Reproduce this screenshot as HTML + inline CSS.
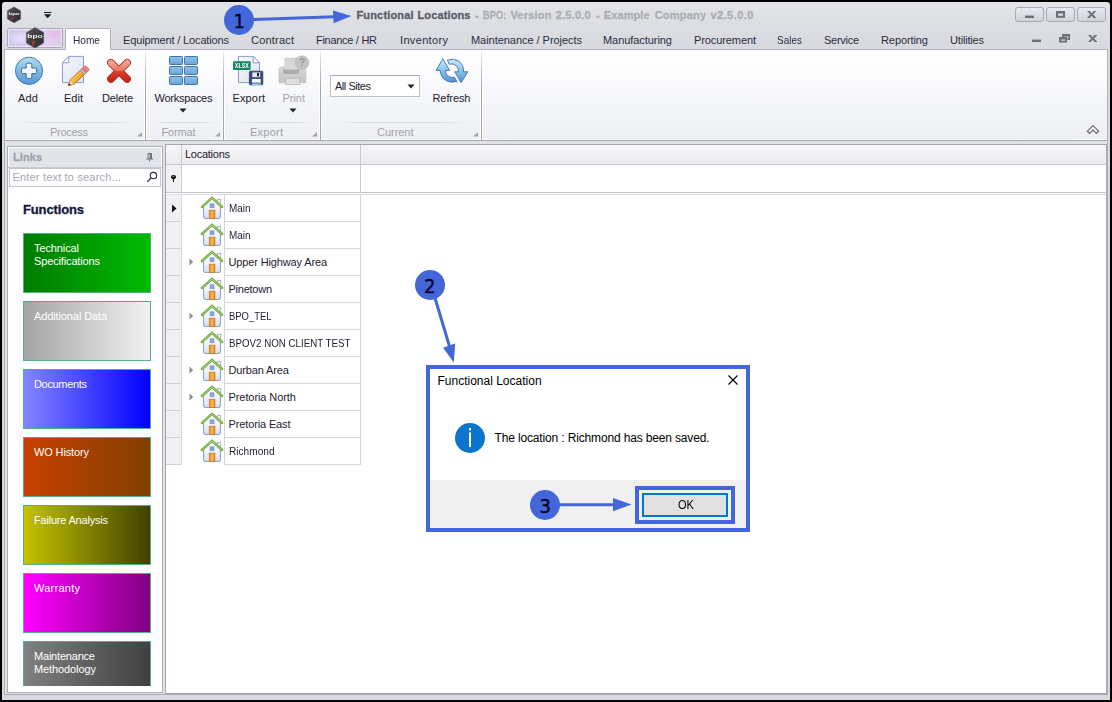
<!DOCTYPE html>
<html><head><meta charset="utf-8"><title>Functional Locations</title>
<style>
*{box-sizing:border-box;margin:0;padding:0}
html,body{width:1112px;height:702px;overflow:hidden;background:#000}
body{font-family:"Liberation Sans",sans-serif;font-size:11px;color:#1e2030;position:relative}
.abs{position:absolute}
.t{position:absolute;white-space:pre}
#win{left:2px;top:2px;width:1108px;height:698px;background:linear-gradient(#e3e4e8,#dcdde2 26px,#d9dadf 48px,#d9dadf);border-radius:3px 3px 0 0}
#ribbon{left:5px;top:49px;width:1102px;height:92px;background:linear-gradient(#ffffff,#fdfdfe 18%,#f5f6f9 55%,#eff0f4);border-top:1px solid #b4b6bf;border-bottom:1px solid #a9abb4}
#ribbon:after{content:"";position:absolute;left:0;right:0;bottom:0;height:1px;background:#fff}
#hometab{left:65px;top:28px;width:46px;height:22px;background:#fff;border:1px solid #b4b6bf;border-bottom:none;border-radius:2px 2px 0 0}
#appbtn{left:7px;top:28px;width:56px;height:20px;border:1px solid #a9a9b6;border-radius:2px;background:radial-gradient(ellipse 14px 7px at 12px 9px,rgba(255,255,255,.45),rgba(255,255,255,0)),radial-gradient(ellipse 12px 6px at 46px 5px,rgba(226,180,232,.7),rgba(226,180,232,0)),linear-gradient(90deg,#cfc7ee,#dccff1 40%,#e6d0f0 75%,#dccaeb);box-shadow:inset 0 0 0 1px rgba(255,255,255,.55)}
.gsep{position:absolute;top:51px;width:3px;height:89px;margin-left:-1px;background:linear-gradient(90deg,#fff 33.3%,#a2a4ae 33.3%,#a2a4ae 66.6%,#fff 66.6%);-webkit-mask-image:linear-gradient(rgba(0,0,0,.2),#000 40%,#000);mask-image:linear-gradient(rgba(0,0,0,.2),#000 40%,#000)}
.gline{position:absolute;top:122px;height:1px;background:linear-gradient(90deg,rgba(218,219,225,0),#dadbe1 18%,#dadbe1 82%,rgba(218,219,225,0))}
.launch{position:absolute;top:131px;width:6px;height:6px}
#strip{left:5px;top:141px;width:1102px;height:553px;background:#e1e2e7}
#links{left:7px;top:146px;width:156px;height:547px;background:#fff;border:1px solid #abadb7}
#lhead{left:8px;top:147px;width:154px;height:20px;background:#e3e4e9;border:1px solid #fff;border-bottom:none}
#lheadb{left:8px;top:167px;width:154px;height:1px;background:#c9cbd2}
#search{left:9px;top:168px;width:152px;height:19px;background:#fff;border:1px solid #c2c4cc}
.sb{left:23px;width:128px;border:1px solid #4fb184}
#grid{left:165px;top:144px;width:942px;height:550px;background:#fff;border:1px solid #a4a6b1}
#ghead{left:166px;top:145px;width:940px;height:19px;background:linear-gradient(#f6f6f8,#ececf0)}
.hl{position:absolute;background:#c9cbd3}
.ind{left:166px;width:15px;height:27px;background:#f1f1f4;border-bottom:1px solid #d2d3da}
.cell{left:224px;width:137px;height:28px;border:1px solid #d5d6dc}
.cbtn{position:absolute;top:7px;width:29px;height:15px;border:1px solid #a7a9b4;border-radius:3px;background:linear-gradient(#e9eaee,#dcdde3 50%,#d2d4db)}
#dlg{left:430px;top:369px;width:316px;height:159px;background:#fff}
#dfoot{left:430px;top:480px;width:316px;height:48px;background:#f0f0f0}
.hi{position:absolute;border:4px solid #4367d9}
#okb{left:642px;top:493px;width:86px;height:24px;background:#e1e1e1;border:2px solid #0078d7}
</style></head><body>
<svg width="0" height="0" style="position:absolute"><defs>
<linearGradient id="wall" x1="0" y1="0" x2="0" y2="1"><stop offset="0" stop-color="#ffffff"/><stop offset=".45" stop-color="#f4f6fb"/><stop offset="1" stop-color="#d6deef"/></linearGradient>
<linearGradient id="door" x1="0" y1="0" x2="1" y2="0"><stop offset="0" stop-color="#e58a1f"/><stop offset=".5" stop-color="#f6b95a"/><stop offset="1" stop-color="#e58a1f"/></linearGradient>
<g id="house">
<rect x="17.3" y="4.4" width="3.4" height="8" fill="#eef1f8" stroke="#a3aecb" stroke-width=".9"/>
<path d="M3.6 11.4 L12 3.8 L20.4 11.4 L20.4 22 Q20.4 23.4 19 23.4 L5 23.4 Q3.6 23.4 3.6 22Z" fill="url(#wall)" stroke="#8c9cc0" stroke-width="1"/>
<rect x="10.1" y="8.8" width="3.9" height="3.9" fill="#8aa6e2" stroke="#7b93cc" stroke-width=".7"/>
<rect x="9.3" y="15.2" width="5.6" height="8.3" fill="url(#door)" stroke="#cc7a1e" stroke-width=".8"/>
<path d="M1.9 12 L12 2.9 L22.1 12" fill="none" stroke="#73aa43" stroke-width="2.5" stroke-linecap="round" stroke-linejoin="miter"/>
<path d="M2.4 11.7 L12 3.1 L21.6 11.7" fill="none" stroke="#b4da7e" stroke-width=".9" stroke-linecap="round"/>
</g>
</defs></svg>
<div id="win" class="abs"></div>
<div class="abs" style="left:4px;top:49px;width:1px;height:646px;background:#b0b2bb"></div>
<div class="abs" style="left:1107px;top:49px;width:1px;height:646px;background:#b0b2bb"></div>
<div class="abs" style="left:4px;top:694px;width:1104px;height:1px;background:#a9abb5"></div>
<div id="ribbon" class="abs"></div>
<div id="appbtn" class="abs"></div>
<div id="hometab" class="abs"></div>
<div class="gsep" style="left:145px"></div><div class="gsep" style="left:223px"></div><div class="gsep" style="left:320px"></div><div class="gsep" style="left:481px"></div>
<div class="gline" style="left:18px;width:118px"></div><div class="gline" style="left:156px;width:58px"></div><div class="gline" style="left:236px;width:76px"></div><div class="gline" style="left:338px;width:130px"></div>
<div class="abs" style="left:330px;top:75px;width:90px;height:22px;background:#fff;border:1px solid #bfc1ca;border-top-color:#abadb7"></div>
<svg class="abs" style="left:407px;top:84px" width="8" height="5" viewBox="0 0 8 5"><path d="M0.5 0.5 H7.5 L4 4.5Z" fill="#1e2030"/></svg>
<svg class="abs" style="left:179px;top:108px" width="8" height="5" viewBox="0 0 8 5"><path d="M0.5 0.5 H7.5 L4 4.5Z" fill="#1e2030"/></svg>
<svg class="abs" style="left:289px;top:108px" width="8" height="5" viewBox="0 0 8 5"><path d="M0.5 0.5 H7.5 L4 4.5Z" fill="#1e2030"/></svg>
<div class="cbtn" style="left:1015px"></div><div class="cbtn" style="left:1046px"></div><div class="cbtn" style="left:1077px"></div>
<svg class="abs" style="left:0;top:0" width="1112" height="145" viewBox="0 0 1112 145">
<defs>
<linearGradient id="gAdd" x1="0" y1="0" x2="0" y2="1"><stop offset="0" stop-color="#b5dcee"/><stop offset=".45" stop-color="#86bde2"/><stop offset="1" stop-color="#5597d3"/></linearGradient>
<linearGradient id="gDel" x1="0" y1="0" x2="0" y2="1"><stop offset="0" stop-color="#f3a392"/><stop offset=".48" stop-color="#e7705e"/><stop offset=".52" stop-color="#d9402f"/><stop offset="1" stop-color="#c92a1c"/></linearGradient>
<linearGradient id="gWs" x1="0" y1="0" x2="0" y2="1"><stop offset="0" stop-color="#8fc0e6"/><stop offset="1" stop-color="#6ba6d9"/></linearGradient>
<linearGradient id="gPg" x1="0" y1="0" x2="1" y2="1"><stop offset="0" stop-color="#f4f6fc"/><stop offset="1" stop-color="#dfe4f3"/></linearGradient>
<linearGradient id="gRf" x1="0" y1="0" x2="0" y2="1"><stop offset="0" stop-color="#cfeaf7"/><stop offset=".5" stop-color="#8cc3e6"/><stop offset="1" stop-color="#4a90d2"/></linearGradient>
<linearGradient id="gPr" x1="0" y1="0" x2="0" y2="1"><stop offset="0" stop-color="#d9d9d9"/><stop offset="1" stop-color="#c4c4c4"/></linearGradient>
<linearGradient id="gPen" x1="0" y1="0" x2="1" y2="1" gradientUnits="objectBoundingBox"><stop offset="0" stop-color="#f9d36a"/><stop offset=".5" stop-color="#f0a626"/><stop offset="1" stop-color="#d98512"/></linearGradient>
<linearGradient id="gHex" x1="0" y1="0" x2="1" y2="1"><stop offset="0" stop-color="#5c5c60"/><stop offset=".5" stop-color="#3c3c3f"/><stop offset="1" stop-color="#2c2c2f"/></linearGradient>
</defs>
<!-- QAT logo -->
<g id="qlogo">
<path d="M14 7 L20.6 10.8 V19 L14 22.8 L7.4 19 V10.8Z" fill="url(#gHex)" stroke="#57575b" stroke-width=".6"/>
<text style="opacity:.99" x="14" y="15.4" font-size="4.4" font-weight="bold" text-anchor="middle" fill="#f4f4f4" font-family="Liberation Sans, sans-serif" textLength="11" lengthAdjust="spacingAndGlyphs">bpo</text>
<path d="M11.6 17.4 L12.6 19.4 L13.4 17.2" stroke="#c23434" stroke-width=".9" fill="none"/>
</g>
<path d="M44 12 H51.3 V13.1 H44Z M44 14.2 H51.3 L47.65 18.2Z" fill="#15162c"/>
<!-- app logo -->
<path d="M35 27.6 L43.6 32.6 V43 L35 48 L26.4 43 V32.6Z" fill="url(#gHex)" stroke="#5a5a5e" stroke-width=".6"/>
<text style="opacity:.99" x="35" y="38.3" font-size="5.2" font-weight="bold" text-anchor="middle" fill="#fafafa" font-family="Liberation Sans, sans-serif" textLength="15.5" lengthAdjust="spacingAndGlyphs">bpo</text>
<path d="M31.8 40.8 L33.4 44.4 L34.8 40.6" stroke="#c43636" stroke-width="1.1" fill="none"/>
<!-- Add -->
<circle cx="29" cy="70.8" r="13.6" fill="url(#gAdd)" stroke="#3f7dbb" stroke-width="1"/>
<path d="M27.4 63.2 H30.6 Q31.8 63.2 31.8 64.4 V68 H35.4 Q36.6 68 36.6 69.2 V72.4 Q36.6 73.6 35.4 73.6 H31.8 V77.2 Q31.8 78.4 30.6 78.4 H27.4 Q26.2 78.4 26.2 77.2 V73.6 H22.6 Q21.4 73.6 21.4 72.4 V69.2 Q21.4 68 22.6 68 H26.2 V64.4 Q26.2 63.2 27.4 63.2Z" fill="#f3f8fc" stroke="#2f65a6" stroke-width="1"/>
<!-- Edit -->
<path d="M68.8 56.4 H83.5 V82.6 H62.5 V62.8Z" fill="url(#gPg)" stroke="#8d9dc6" stroke-width="1"/>
<path d="M68.8 56.4 V62.8 H62.5Z" fill="#fdfdff" stroke="#8d9dc6" stroke-width="1" stroke-linejoin="round"/>
<g transform="translate(68.2 85.7) rotate(-43.2)">
<path d="M0 0 L5.6 -3 H22 V3 H5.6Z" fill="url(#gPen)" stroke="#b9720f" stroke-width=".7"/>
<path d="M5.6 -1 H19.6 M5.6 1 H19.6" stroke="#fbe08e" stroke-width=".7"/>
<path d="M0 0 L5.6 -3 V3Z" fill="#f3d9b0" stroke="#b98a52" stroke-width=".5"/>
<path d="M0 0 L2.4 -1.3 V1.3Z" fill="#2b2b3a"/>
<rect x="19.6" y="-3" width="2.4" height="6" fill="#b9c0d2" stroke="#7f88a3" stroke-width=".5"/>
<path d="M22 -3 H25.2 Q26.4 -3 26.4 -1.8 V1.8 Q26.4 3 25.2 3 H22Z" fill="#ee7f7c" stroke="#c9524f" stroke-width=".6"/>
</g>
<!-- Delete -->
<g stroke-linecap="round" fill="none">
<path d="M110.9 62.8 L127.1 79 M127.1 62.8 L110.9 79" stroke="#a92c22" stroke-width="7.6"/>
<path d="M110.9 62.8 L127.1 79 M127.1 62.8 L110.9 79" stroke="url(#gDel)" stroke-width="6"/>
</g>
<!-- Workspaces -->
<g fill="url(#gWs)" stroke="#4273ad" stroke-width="1">
<rect x="169.5" y="56.5" width="13" height="8" rx=".8"/><rect x="184.5" y="56.5" width="13" height="8" rx=".8"/>
<rect x="169.5" y="66.5" width="13" height="8" rx=".8"/><rect x="184.5" y="66.5" width="13" height="8" rx=".8"/>
<rect x="169.5" y="76.5" width="13" height="8" rx=".8"/><rect x="184.5" y="76.5" width="13" height="8" rx=".8"/>
</g>
<!-- Export -->
<path d="M238.5 56.4 H253.2 L259.5 62.8 V82.6 H238.5Z" fill="url(#gPg)" stroke="#8d9dc6" stroke-width="1"/>
<path d="M253.2 56.4 V62.8 H259.5Z" fill="#fdfdff" stroke="#8d9dc6" stroke-width="1" stroke-linejoin="round"/>
<rect x="233" y="61.2" width="17.6" height="8.8" rx=".8" fill="#0d8a5c"/>
<text style="opacity:.99" x="241.8" y="68.2" font-size="7.2" font-weight="bold" text-anchor="middle" fill="#fff" font-family="Liberation Mono, monospace" textLength="14" lengthAdjust="spacingAndGlyphs">XLSX</text>
<rect x="249.4" y="71.2" width="13.4" height="13.6" rx="1" fill="#3e4d7c" stroke="#2c375e" stroke-width=".8"/>
<rect x="252.4" y="72.4" width="7.8" height="4.8" fill="#e6e9ee"/><rect x="257" y="73" width="2" height="3.4" fill="#1c2238"/>
<rect x="252" y="79" width="8.6" height="5.8" fill="#fafbfd"/><rect x="252" y="82.4" width="8.6" height="2" fill="#5b9bd5"/>
<!-- Print (disabled) -->
<rect x="285" y="58.2" width="11.4" height="11.4" fill="#d6d6d6" stroke="#c2c2c2" stroke-width=".8"/>
<path d="M279 82.8 V69.6 Q279 67 281.6 67 H303.2 Q305.8 67 305.8 69.6 V82.8Z" fill="url(#gPr)" stroke="#bdbdbd" stroke-width=".7"/>
<path d="M283 69.3 H299.5 V71.5 Q299.5 74 297 74 H285.5 Q283 74 283 71.5Z" fill="#adadad"/>
<rect x="285" y="61" width="11.4" height="8.4" fill="#d9d9d9"/>
<rect x="285.4" y="78.2" width="14.4" height="6.4" fill="#dedede" stroke="#b9b9b9" stroke-width=".8"/>
<circle cx="302" cy="62.6" r="6.8" fill="#c3c3c3" stroke="#b7b7b7" stroke-width=".6"/>
<text x="302" y="66.4" font-size="11" font-weight="bold" text-anchor="middle" fill="#9c9c9c" font-family="Liberation Sans, sans-serif">?</text>
<!-- Refresh -->
<g fill="url(#gRf)" stroke="#3571b3" stroke-width=".9" stroke-linejoin="round">
<path d="M442.8 58.8 L449.6 70.4 H445.3 Q445.6 74.2 448.6 76.4 Q451.4 78 454.5 77.4 L456.9 81.3 Q451.4 83.4 446.6 80.8 Q440.6 77.4 440.1 70.4 H436Z"/>
<path d="M461.2 82.6 L454.7 71.8 H458.5 Q458.6 68 456.2 65.6 Q453.2 63 449.3 64.2 L447.2 60.2 Q453.4 57.8 458.8 61.2 Q463.8 64.8 463.6 71.8 H467.7Z"/>
</g>
<!-- launchers -->
<g fill="#a3a5ae"><path d="M142 132 V136.6 H137Z"/><path d="M220 132 V136.6 H215Z"/><path d="M317 132 V136.6 H312Z"/><path d="M478 132 V136.6 H473Z"/></g>
<!-- collapse chevron -->
<path d="M1093 125.6 L1098.6 131.2 L1096.4 133.4 L1093 130 L1089.6 133.4 L1087.4 131.2Z" fill="#fff" stroke="#6f6f75" stroke-width="1.3"/>
<!-- window button glyphs -->
<g fill="#6d6f7f">
<rect x="1025" y="15.6" width="9" height="2.4"/>
<path d="M1056 11 H1065 V17.8 H1056Z M1058 13.6 V15.8 H1063 V13.6Z" fill-rule="evenodd"/>
<path d="M1087 11 H1089.8 L1091.7 13.2 L1093.6 11 H1096.4 L1093.1 14.5 L1096.4 18 H1093.6 L1091.7 15.8 L1089.8 18 H1087 L1090.3 14.5Z"/>
<rect x="1032" y="39.6" width="9" height="2.4"/>
<path d="M1062 34 H1070 V40 H1067.4 V38.2 H1068.2 V36.4 H1063.8 V37 H1062Z"/>
<path d="M1059 37 H1067 V42.6 H1059Z M1060.8 39.4 V40.8 H1065.2 V39.4Z" fill-rule="evenodd"/>
<path d="M1088 35 H1090.8 L1092.7 37.2 L1094.6 35 H1097.4 L1094.1 38.5 L1097.4 42 H1094.6 L1092.7 39.8 L1090.8 42 H1088 L1091.3 38.5Z"/>
</g>
</svg>

<div id="strip" class="abs"></div>
<div id="links" class="abs"></div><div id="lhead" class="abs"></div><div id="lheadb" class="abs"></div><div id="search" class="abs"></div>
<div class="abs sb" style="top:233px;height:60px;background:linear-gradient(90deg,#007c00,#00ba00)"></div><div class="abs sb" style="top:301px;height:60px;background:linear-gradient(90deg,#a4a4a4,#f2f2f2)"></div><div class="abs sb" style="top:369px;height:60px;background:linear-gradient(90deg,#8484ff,#0000ff)"></div><div class="abs sb" style="top:437px;height:60px;background:linear-gradient(90deg,#c84000,#804000)"></div><div class="abs sb" style="top:505px;height:60px;background:linear-gradient(90deg,#c4c400,#404000)"></div><div class="abs sb" style="top:573px;height:60px;background:linear-gradient(90deg,#ff00ff,#800080)"></div><div class="abs sb" style="top:641px;height:45px;background:linear-gradient(90deg,#808080,#404040);border-bottom:none"></div>
<div id="grid" class="abs"></div><div id="ghead" class="abs"></div>
<div class="hl" style="left:166px;top:164px;width:940px;height:1px"></div>
<div class="hl" style="left:181px;top:145px;width:1px;height:47px"></div>
<div class="hl" style="left:360px;top:145px;width:1px;height:47px"></div>
<div class="abs" style="left:166px;top:165px;width:15px;height:27px;background:#f1f1f4"></div>
<div class="hl" style="left:166px;top:192px;width:940px;height:1px;background:#c3c5cd"></div>
<div class="hl" style="left:166px;top:194px;width:940px;height:1px;background:#dcdde3"></div>
<div class="hl" style="left:181px;top:195px;width:1px;height:270px;background:#d5d6dc"></div>
<div class="abs ind" style="top:195px"></div><div class="abs cell" style="top:194px"></div><div class="abs ind" style="top:222px"></div><div class="abs cell" style="top:221px"></div><div class="abs ind" style="top:249px"></div><div class="abs cell" style="top:248px"></div><div class="abs ind" style="top:276px"></div><div class="abs cell" style="top:275px"></div><div class="abs ind" style="top:303px"></div><div class="abs cell" style="top:302px"></div><div class="abs ind" style="top:330px"></div><div class="abs cell" style="top:329px"></div><div class="abs ind" style="top:357px"></div><div class="abs cell" style="top:356px"></div><div class="abs ind" style="top:384px"></div><div class="abs cell" style="top:383px"></div><div class="abs ind" style="top:411px"></div><div class="abs cell" style="top:410px"></div><div class="abs ind" style="top:438px"></div><div class="abs cell" style="top:437px"></div><svg class="abs" style="left:200px;top:195px" width="24" height="24" viewBox="0 0 24 24"><use href="#house"/></svg><svg class="abs" style="left:200px;top:222px" width="24" height="24" viewBox="0 0 24 24"><use href="#house"/></svg><svg class="abs" style="left:200px;top:249px" width="24" height="24" viewBox="0 0 24 24"><use href="#house"/></svg><svg class="abs" style="left:200px;top:276px" width="24" height="24" viewBox="0 0 24 24"><use href="#house"/></svg><svg class="abs" style="left:200px;top:303px" width="24" height="24" viewBox="0 0 24 24"><use href="#house"/></svg><svg class="abs" style="left:200px;top:330px" width="24" height="24" viewBox="0 0 24 24"><use href="#house"/></svg><svg class="abs" style="left:200px;top:357px" width="24" height="24" viewBox="0 0 24 24"><use href="#house"/></svg><svg class="abs" style="left:200px;top:384px" width="24" height="24" viewBox="0 0 24 24"><use href="#house"/></svg><svg class="abs" style="left:200px;top:411px" width="24" height="24" viewBox="0 0 24 24"><use href="#house"/></svg><svg class="abs" style="left:200px;top:438px" width="24" height="24" viewBox="0 0 24 24"><use href="#house"/></svg><svg class="abs" style="left:189px;top:258px" width="5" height="8" viewBox="0 0 5 8"><path d="M0.5 0.5 L4.2 4 L0.5 7.5Z" fill="#8b8b8b"/></svg><svg class="abs" style="left:189px;top:312px" width="5" height="8" viewBox="0 0 5 8"><path d="M0.5 0.5 L4.2 4 L0.5 7.5Z" fill="#8b8b8b"/></svg><svg class="abs" style="left:189px;top:366px" width="5" height="8" viewBox="0 0 5 8"><path d="M0.5 0.5 L4.2 4 L0.5 7.5Z" fill="#8b8b8b"/></svg><svg class="abs" style="left:189px;top:393px" width="5" height="8" viewBox="0 0 5 8"><path d="M0.5 0.5 L4.2 4 L0.5 7.5Z" fill="#8b8b8b"/></svg>
<svg class="abs" style="left:172px;top:204px" width="5" height="9" viewBox="0 0 5 9"><path d="M0 0.5 L4.5 4.5 L0 8.5Z" fill="#111"/></svg>
<svg class="abs" style="left:140px;top:148px" width="45" height="40" viewBox="140 148 45 40">
<path d="M147.6 153 H152 V158.4 H153.2 V159.6 H150.1 V161.4 H149.1 V159.6 H146 V158.4 H147.6Z" fill="#71737f"/><rect x="148.6" y="154" width="1" height="4.4" fill="#e3e4e9"/>
<circle cx="153.5" cy="175.6" r="3.2" fill="none" stroke="#2a2b3c" stroke-width="1.1"/><path d="M151.2 177.9 L147.3 181.7" stroke="#2a2b3c" stroke-width="1.3"/>
<ellipse cx="173.5" cy="177" rx="2.6" ry="2.1" fill="#111"/><ellipse cx="173.3" cy="176.5" rx="1" ry=".55" fill="#9a9a9a"/><path d="M171.6 177.6 L173 179.4 V182 H174 V179.4 L175.4 177.6Z" fill="#111"/>
</svg>
<div id="dlg" class="abs"></div><div id="dfoot" class="abs"></div>
<div class="hi" style="left:426px;top:365px;width:324px;height:167px"></div>
<div class="hi" style="left:635px;top:486px;width:100px;height:38px"></div>
<div id="okb" class="abs"></div>
<svg class="abs" style="left:0;top:0" width="1112" height="702" viewBox="0 0 1112 702">
<g fill="#4367d9" stroke="none">
<circle cx="239" cy="20" r="15"/><circle cx="430" cy="285" r="15"/><circle cx="545" cy="505" r="15"/>
<path d="M333 10.4 L351.5 16 L333.6 23.2Z"/>
<path d="M443 347.8 L455.2 343.6 L453.8 362.6Z"/>
<path d="M613 498 L631.5 504.6 L613 511.2Z"/>
</g>
<g stroke="#4367d9" stroke-width="3" fill="none"><path d="M253 19.6 L335 16.8"/><path d="M435 298 L449.4 346"/><path d="M559 504.7 L614 504.7"/></g>
<circle cx="470" cy="438" r="15" fill="#0b74cd"/><rect x="469" y="428" width="2" height="2.4" fill="#fff"/><rect x="469" y="432.4" width="2" height="14.6" fill="#fff"/>
<path d="M728.5 375.5 L737.5 384.5 M737.5 375.5 L728.5 384.5" stroke="#000" stroke-width="1.1"/>
</svg>
<div class="t" style="left:356.5px;top:8.19px;line-height:14px;letter-spacing:0.15px;font-weight:bold;color:#5c5e69;-webkit-text-stroke:.3px;">Functional</div>
<div class="t" style="left:417.5px;top:8.19px;line-height:14px;letter-spacing:0.13px;font-weight:bold;color:#5c5e69;-webkit-text-stroke:.3px;">Locations</div>
<div class="t" style="left:475.0px;top:8.19px;line-height:14px;letter-spacing:0.33px;font-weight:bold;color:#acaeb7;-webkit-text-stroke:.3px;">-</div>
<div class="t" style="left:482.6px;top:8.19px;line-height:14px;letter-spacing:0.00px;font-weight:bold;color:#acaeb7;-webkit-text-stroke:.3px;transform:scaleX(0.851);transform-origin:0 0;">BPO:</div>
<div class="t" style="left:510.4px;top:8.19px;line-height:14px;letter-spacing:0.23px;font-weight:bold;color:#acaeb7;-webkit-text-stroke:.3px;">Version</div>
<div class="t" style="left:555.7px;top:8.19px;line-height:14px;letter-spacing:0.21px;font-weight:bold;color:#acaeb7;-webkit-text-stroke:.3px;">2.5.0.0</div>
<div class="t" style="left:596.0px;top:8.19px;line-height:14px;letter-spacing:0.33px;font-weight:bold;color:#acaeb7;-webkit-text-stroke:.3px;">-</div>
<div class="t" style="left:603.8px;top:8.19px;line-height:14px;letter-spacing:0.09px;font-weight:bold;color:#acaeb7;-webkit-text-stroke:.3px;">Example</div>
<div class="t" style="left:654.7px;top:8.19px;line-height:14px;letter-spacing:0.23px;font-weight:bold;color:#acaeb7;-webkit-text-stroke:.3px;">Company</div>
<div class="t" style="left:710.4px;top:8.19px;line-height:14px;letter-spacing:0.46px;font-weight:bold;color:#acaeb7;-webkit-text-stroke:.3px;">v2.5.0.0</div>
<div class="t" style="left:73.0px;top:33.19px;line-height:14px;letter-spacing:0.00px;color:#2b2d42;transform:scaleX(0.920);transform-origin:0 0;">Home</div>
<div class="t" style="left:123.0px;top:33.19px;line-height:14px;letter-spacing:-0.14px;color:#2b2d42;">Equipment / Locations</div>
<div class="t" style="left:251.0px;top:33.19px;line-height:14px;letter-spacing:0.20px;color:#2b2d42;">Contract</div>
<div class="t" style="left:316.0px;top:33.19px;line-height:14px;letter-spacing:-0.29px;color:#2b2d42;">Finance / HR</div>
<div class="t" style="left:400.0px;top:33.19px;line-height:14px;letter-spacing:0.34px;color:#2b2d42;">Inventory</div>
<div class="t" style="left:471.0px;top:33.19px;line-height:14px;letter-spacing:-0.04px;color:#2b2d42;">Maintenance / Projects</div>
<div class="t" style="left:603.0px;top:33.19px;line-height:14px;letter-spacing:-0.06px;color:#2b2d42;">Manufacturing</div>
<div class="t" style="left:694.0px;top:33.19px;line-height:14px;letter-spacing:-0.10px;color:#2b2d42;">Procurement</div>
<div class="t" style="left:777.0px;top:33.19px;line-height:14px;letter-spacing:0.00px;color:#2b2d42;transform:scaleX(0.908);transform-origin:0 0;">Sales</div>
<div class="t" style="left:824.0px;top:33.19px;line-height:14px;letter-spacing:-0.28px;color:#2b2d42;">Service</div>
<div class="t" style="left:881.0px;top:33.19px;line-height:14px;letter-spacing:-0.09px;color:#2b2d42;">Reporting</div>
<div class="t" style="left:950.0px;top:33.19px;line-height:14px;letter-spacing:-0.18px;color:#2b2d42;">Utilities</div>
<div class="t" style="left:18.0px;top:91.19px;line-height:14px;letter-spacing:0.21px;">Add</div>
<div class="t" style="left:64.0px;top:91.19px;line-height:14px;letter-spacing:0.01px;">Edit</div>
<div class="t" style="left:102.0px;top:91.19px;line-height:14px;letter-spacing:-0.16px;">Delete</div>
<div class="t" style="left:154.5px;top:91.19px;line-height:14px;letter-spacing:-0.26px;">Workspaces</div>
<div class="t" style="left:232.5px;top:91.19px;line-height:14px;letter-spacing:0.14px;">Export</div>
<div class="t" style="left:282.5px;top:91.19px;line-height:14px;letter-spacing:-0.03px;color:#a3a5af;">Print</div>
<div class="t" style="left:432.5px;top:91.19px;line-height:14px;letter-spacing:-0.09px;">Refresh</div>
<div class="t" style="left:335.0px;top:79.19px;line-height:14px;letter-spacing:-0.47px;">All Sites</div>
<div class="t" style="left:50.0px;top:125.19px;line-height:14px;letter-spacing:-0.29px;color:#9fa1ac;">Process</div>
<div class="t" style="left:161.5px;top:125.19px;line-height:14px;letter-spacing:-0.17px;color:#9fa1ac;">Format</div>
<div class="t" style="left:250.0px;top:125.19px;line-height:14px;letter-spacing:0.24px;color:#9fa1ac;">Export</div>
<div class="t" style="left:377.0px;top:125.19px;line-height:14px;letter-spacing:-0.03px;color:#9fa1ac;">Current</div>
<div class="t" style="left:13.0px;top:150.19px;line-height:14px;letter-spacing:0.07px;font-weight:bold;color:#9fa3b3;-webkit-text-stroke:.3px;">Links</div>
<div class="t" style="left:12.5px;top:170.19px;line-height:14px;letter-spacing:0.18px;color:#a5a7b2;">Enter text to search...</div>
<div class="t" style="left:23.0px;top:201.00px;line-height:17px;letter-spacing:-0.14px;font-size:13px;font-weight:bold;color:#15163a;-webkit-text-stroke:.3px;">Functions</div>
<div class="t" style="left:185.0px;top:147.19px;line-height:14px;letter-spacing:-0.26px;">Locations</div>
<div class="t" style="left:228.5px;top:201.19px;line-height:14px;letter-spacing:0.00px;transform:scaleX(0.902);transform-origin:0 0;">Main</div>
<div class="t" style="left:228.5px;top:228.19px;line-height:14px;letter-spacing:0.00px;transform:scaleX(0.902);transform-origin:0 0;">Main</div>
<div class="t" style="left:228.5px;top:255.19px;line-height:14px;letter-spacing:-0.14px;">Upper Highway Area</div>
<div class="t" style="left:228.5px;top:282.19px;line-height:14px;letter-spacing:-0.25px;">Pinetown</div>
<div class="t" style="left:228.5px;top:309.19px;line-height:14px;letter-spacing:0.00px;transform:scaleX(0.858);transform-origin:0 0;">BPO_TEL</div>
<div class="t" style="left:228.5px;top:336.19px;line-height:14px;letter-spacing:0.00px;transform:scaleX(0.886);transform-origin:0 0;">BPOV2 NON CLIENT TEST</div>
<div class="t" style="left:228.5px;top:363.19px;line-height:14px;letter-spacing:-0.13px;">Durban Area</div>
<div class="t" style="left:228.5px;top:390.19px;line-height:14px;letter-spacing:-0.08px;">Pretoria North</div>
<div class="t" style="left:228.5px;top:417.19px;line-height:14px;letter-spacing:-0.13px;">Pretoria East</div>
<div class="t" style="left:228.5px;top:444.19px;line-height:14px;letter-spacing:0.00px;transform:scaleX(0.919);transform-origin:0 0;">Richmond</div>
<div class="t" style="left:34.0px;top:241.19px;line-height:14px;letter-spacing:-0.11px;color:#fff;">Technical</div>
<div class="t" style="left:34.0px;top:254.19px;line-height:14px;letter-spacing:-0.14px;color:#fff;">Specifications</div>
<div class="t" style="left:34.0px;top:309.19px;line-height:14px;letter-spacing:-0.11px;color:#fff;">Additional Data</div>
<div class="t" style="left:34.0px;top:377.19px;line-height:14px;letter-spacing:-0.33px;color:#fff;">Documents</div>
<div class="t" style="left:34.0px;top:445.19px;line-height:14px;letter-spacing:-0.14px;color:#fff;">WO History</div>
<div class="t" style="left:34.0px;top:513.19px;line-height:14px;letter-spacing:-0.20px;color:#fff;">Failure Analysis</div>
<div class="t" style="left:34.0px;top:581.19px;line-height:14px;letter-spacing:0.25px;color:#fff;">Warranty</div>
<div class="t" style="left:34.0px;top:649.19px;line-height:14px;letter-spacing:-0.20px;color:#fff;">Maintenance</div>
<div class="t" style="left:34.0px;top:662.19px;line-height:14px;letter-spacing:-0.10px;color:#fff;">Methodology</div>
<div class="t" style="left:437.5px;top:372.84px;line-height:16px;letter-spacing:-0.00px;font-size:12px;color:#000;">Functional Location</div>
<div class="t" style="left:494.5px;top:429.84px;line-height:16px;letter-spacing:-0.15px;font-size:12px;color:#000;">The location : Richmond has been saved.</div>
<div class="t" style="left:677.5px;top:496.84px;line-height:16px;letter-spacing:0.00px;font-size:12px;color:#000;transform:scaleX(0.923);transform-origin:0 0;">OK</div>
<div class="t" style="left:233.5px;top:8.08px;line-height:26px;letter-spacing:-0.95px;font-size:20px;color:#06062a;font-family:'DejaVu Sans Condensed', 'DejaVu Sans', sans-serif;-webkit-text-stroke:.45px #06062a;">1</div>
<div class="t" style="left:424.0px;top:273.08px;line-height:26px;letter-spacing:-0.45px;font-size:20px;color:#06062a;font-family:'DejaVu Sans Condensed', 'DejaVu Sans', sans-serif;-webkit-text-stroke:.45px #06062a;">2</div>
<div class="t" style="left:539.5px;top:493.08px;line-height:26px;letter-spacing:-0.45px;font-size:20px;color:#06062a;font-family:'DejaVu Sans Condensed', 'DejaVu Sans', sans-serif;-webkit-text-stroke:.45px #06062a;">3</div>
</body></html>
